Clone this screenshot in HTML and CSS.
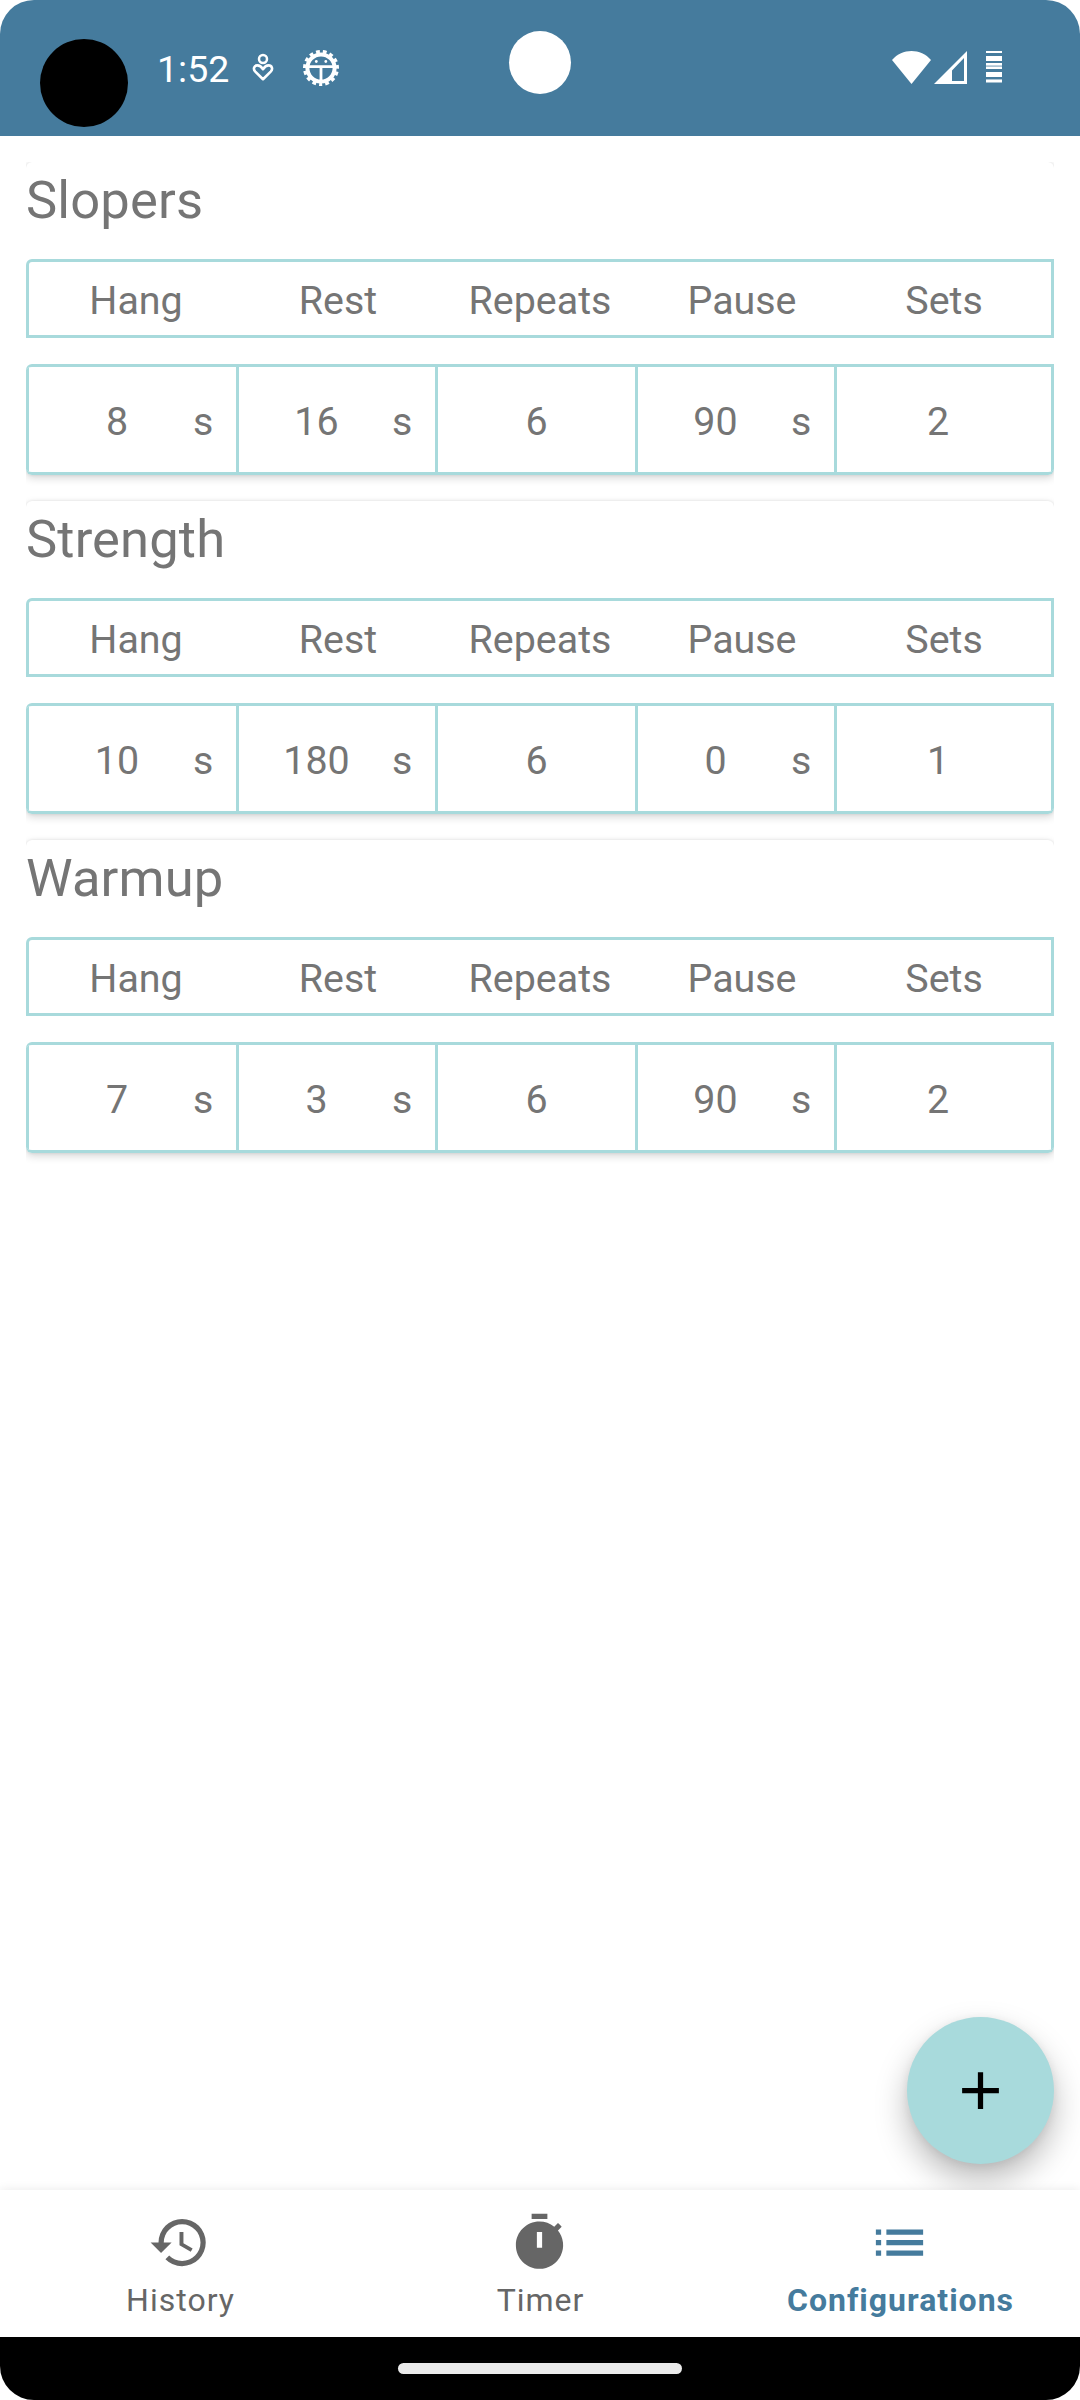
FILE: index.html
```html
<!DOCTYPE html>
<html lang="en">
<head>
<meta charset="utf-8">
<title>Configurations</title>
<link rel="stylesheet" href="styles.css">
</head>
<body>
<div class="screen">
  <header class="status">
    <span class="status-dot"></span>
    <span class="clock">1:52</span>
    <svg class="heart" viewBox="0 0 22 30" fill="none" stroke="#fff"><circle cx="11" cy="6" r="4" stroke-width="2.500"/><path d="M11 26.2 3.300 18.600C.600 15.800 2.300 12.400 5.400 12.400c2.400 0 4.200 1.700 5.600 3.800 1.400-2.100 3.200-3.800 5.600-3.800 3.100 0 4.800 3.400 2.100 6.200z" stroke-width="2.600" stroke-linejoin="round"/></svg>
    <svg class="bug" viewBox="0 0 38 38"><circle cx="19" cy="19" r="16" fill="none" stroke="#fff" stroke-width="4" stroke-dasharray="3.700 3.002" stroke-dashoffset="1.850" transform="rotate(90 19 19)"/><circle cx="19" cy="19" r="13.600" fill="none" stroke="#fff" stroke-width="4"/><path d="M6 17.600h26M19 17v15" stroke="#fff" stroke-width="2.800"/><circle cx="14.300" cy="12.500" r="1.400" fill="#fff"/><circle cx="23.800" cy="12.500" r="1.400" fill="#fff"/></svg>
    <span class="camera"></span>
    <svg class="signals" viewBox="0 0 112 36" fill="#fff"><path d="M2 10C12-2 31-2 41 10L21.500 34z"/><path fill-rule="evenodd" d="M44 34 77 1v33zM62 20.500v10.500h12V8z"/><path d="M96 1h16v2H96zM96 6h16v5H96zM96 13h16v2.200H96zM96 17h16v2H96zM96 22h16v5H96zM96 30h16v2.500H96z"/><path d="M96 15h16v2H96zM96 29h16v1H96z" opacity=".55"/></svg>
  </header>
  <main class="list">
    <section class="card">
      <h2>Slopers</h2>
      <div class="head"><span>Hang</span><span>Rest</span><span>Repeats</span><span>Pause</span><span>Sets</span></div>
      <div class="values"><div class="cell first"><b>8</b><i>s</i></div><div class="cell"><b>16</b><i>s</i></div><div class="cell"><b>6</b></div><div class="cell"><b>90</b><i>s</i></div><div class="cell last"><b>2</b></div></div>
    </section>
    <section class="card">
      <h2>Strength</h2>
      <div class="head"><span>Hang</span><span>Rest</span><span>Repeats</span><span>Pause</span><span>Sets</span></div>
      <div class="values"><div class="cell first"><b>10</b><i>s</i></div><div class="cell"><b>180</b><i>s</i></div><div class="cell"><b>6</b></div><div class="cell"><b>0</b><i>s</i></div><div class="cell last"><b>1</b></div></div>
    </section>
    <section class="card">
      <h2>Warmup</h2>
      <div class="head"><span>Hang</span><span>Rest</span><span>Repeats</span><span>Pause</span><span>Sets</span></div>
      <div class="values"><div class="cell first"><b>7</b><i>s</i></div><div class="cell"><b>3</b><i>s</i></div><div class="cell"><b>6</b></div><div class="cell"><b>90</b><i>s</i></div><div class="cell last"><b>2</b></div></div>
    </section>
  </main>
  <button class="fab" aria-label="Add"><svg viewBox="0 0 24 24"><path d="M19 13h-6v6h-2v-6H5v-2h6V5h2v6h6v2z"/></svg></button>
  <nav class="tabs">
    <a class="tab"><svg viewBox="0 0 24 24"><path d="M13 3a9 9 0 0 0-9 9H1l3.890 3.890.070.140L9 12H6c0-3.870 3.130-7 7-7s7 3.130 7 7-3.130 7-7 7c-1.930 0-3.680-.790-4.940-2.060l-1.420 1.420A8.954 8.954 0 0 0 13 21a9 9 0 0 0 0-18zm-1 5v5l4.280 2.540.720-1.210-3.500-2.080V8H12z"/></svg><span>History</span></a>
    <a class="tab"><svg viewBox="0 0 24 24"><path fill-rule="evenodd" d="M15 1H9v2h6V1zM19.030 7.390l1.420-1.420c-.430-.510-.900-.990-1.410-1.410l-1.420 1.420A8.962 8.962 0 0 0 12 4c-4.970 0-9 4.030-9 9s4.020 9 9 9a8.994 8.994 0 0 0 7.030-14.610zM13 14h-2V8h2v6z"/></svg><span>Timer</span></a>
    <a class="tab active"><svg viewBox="0 0 24 24"><path d="M3 13h2v-2H3v2zm0 4h2v-2H3v2zm0-8h2V7H3v2zm4 4h14v-2H7v2zm0 4h14v-2H7v2zM7 7v2h14V7H7z"/></svg><span>Configurations</span></a>
  </nav>
  <footer class="gesture"><span></span></footer>
</div>
</body>
</html>
```
FILE: styles.css
```css
* { box-sizing: border-box; }
body { margin: 0; background: #fff; font-family: Roboto, sans-serif; color: #757575; }
.screen { position: relative; width: 1080px; height: 2400px; display: flex; flex-direction: column; background: #fff; border-radius: 34px; overflow: hidden; }

.status { position: relative; flex: none; height: 136px; padding-left: 40px; display: flex; align-items: flex-start; background: #457b9d; color: #fff; }
.status-dot { width: 88px; height: 88px; margin-top: 39px; border-radius: 50%; background: #000; }
.clock { margin: 47px 0 0 29px; width: 95px; font-size: 37.500px; line-height: 44px; }
.heart { width: 22px; height: 30px; margin-top: 53px; }
.bug { width: 38px; height: 38px; margin: 49px 0 0 28px; }
.camera { position: absolute; left: 509px; top: 31px; width: 62px; height: 63px; border-radius: 50%; background: #fff; }
.signals { width: 112px; height: 36px; margin: 50px 78px 0 auto; }

.list { flex: 1; min-height: 0; margin: 26px 26px 0; overflow: hidden; }
.card { height: 313px; margin-bottom: 26px; background: #fff; border-radius: 6px; box-shadow: 0 3px 9px rgba(0, 0, 0, .16), 0 0 3px rgba(0, 0, 0, .1); }
.card h2 { margin: 0; height: 97px; padding-top: 7px; font-size: 52.500px; font-weight: 400; line-height: 62px; letter-spacing: .15px; }
.head { height: 79px; padding: 4px 6px 0; display: grid; grid-template-columns: repeat(5, 1fr); align-items: center; text-align: center; border: 3px solid #a8dadc; border-top-left-radius: 6px; font-size: 39.400px; }
.values { height: 111px; margin-top: 26px; display: grid; grid-template-columns: 210px 199px 200px 199px 220px; border: solid #a8dadc; border-width: 3px 0; border-radius: 6px 0 6px 6px; font-size: 39.400px; letter-spacing: .1px; overflow: hidden; }
.cell { display: flex; align-items: center; padding-top: 4px; border-left: 3px solid #a8dadc; }
.cell.first { padding-left: 12px; }
.cell.last { padding-right: 12px; border-right: 3px solid #a8dadc; }
.cell b { flex: 1; text-align: center; font-weight: 400; }
.cell i { width: 43px; font-style: normal; }
.cell:not(.first):has(i) b { padding-left: 2px; }

.fab { position: absolute; left: 907px; top: 2017px; width: 147px; height: 147px; padding: 42px; border: 0; border-radius: 50%; background: #a8dadc; box-shadow: 0 16px 32px rgba(0, 0, 0, .27), 0 2px 10px rgba(0, 0, 0, .07); }
.fab svg { display: block; width: 63px; height: 63px; }

.tabs { position: relative; flex: none; height: 147px; display: grid; grid-template-columns: repeat(3, 1fr); background: #fff; box-shadow: 0 0 10px rgba(0, 0, 0, .09); }
.tab { display: flex; flex-direction: column; align-items: center; padding-top: 21px; font-size: 32px; line-height: 38px; letter-spacing: 1px; color: #666; }
.tab svg { width: 63px; height: 63px; margin-right: 1px; fill: currentColor; }
.tab span { margin-top: 7px; padding-left: 1px; }
.tab.active { color: #457b9d; font-weight: 700; }

.gesture { position: relative; flex: none; height: 63px; display: flex; justify-content: center; align-items: flex-start; padding-top: 26px; background: #000; }
.gesture span { width: 284px; height: 11px; border-radius: 6px; background: #ebebeb; }
```
